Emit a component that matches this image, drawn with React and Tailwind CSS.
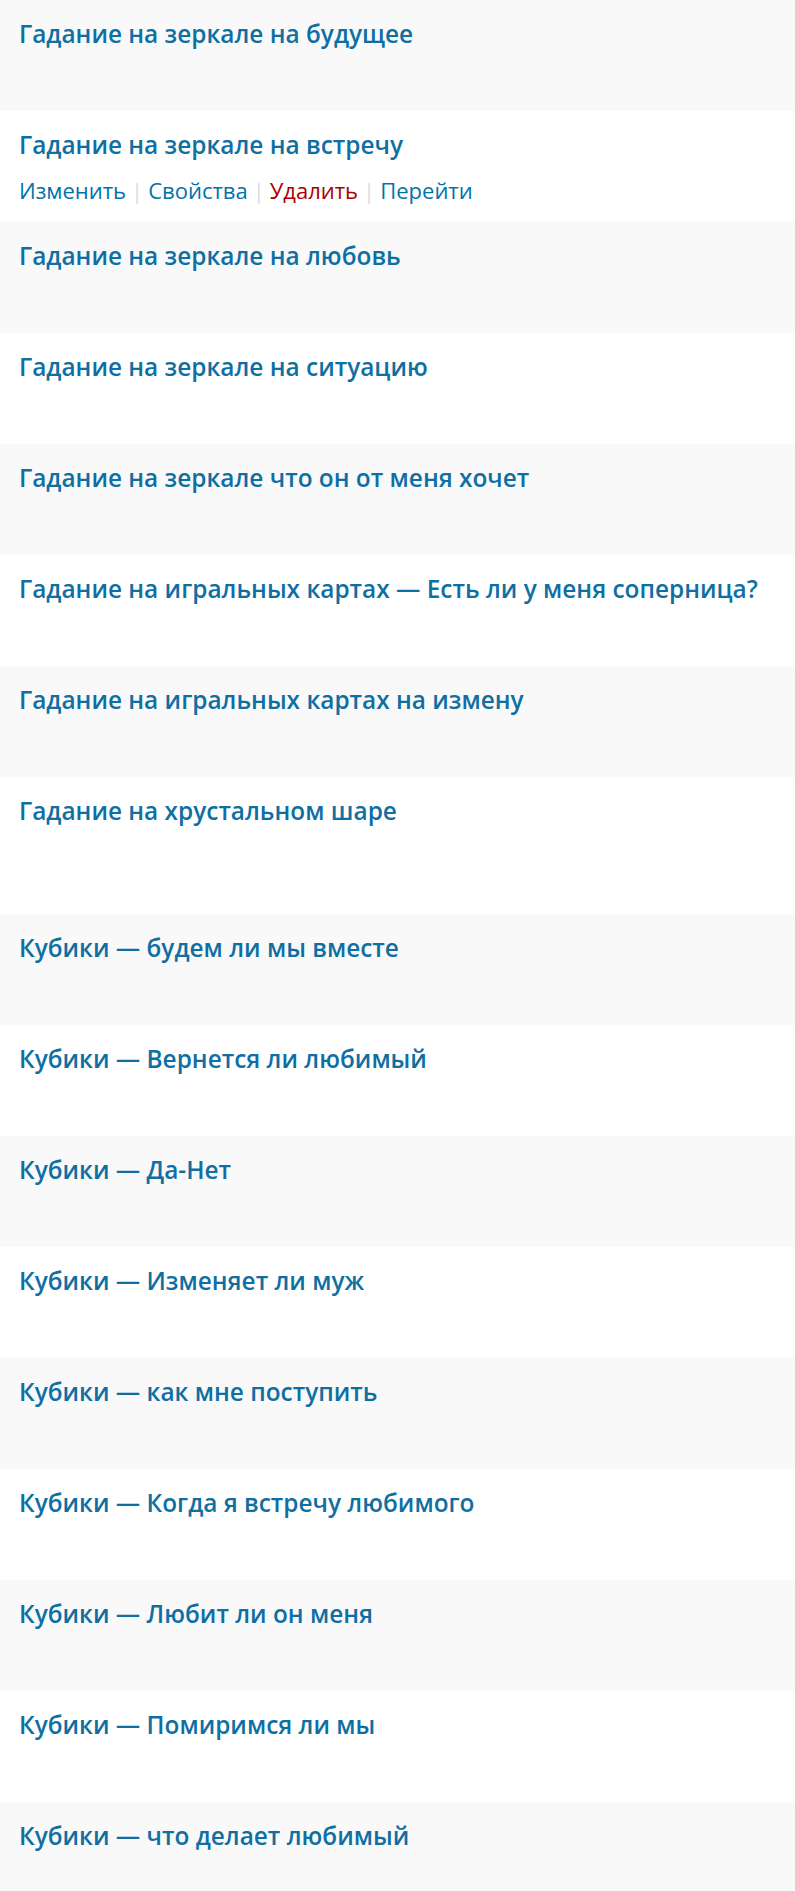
const posts = [
  'Гадание на зеркале на будущее',
  'Гадание на зеркале на встречу',
  'Гадание на зеркале на любовь',
  'Гадание на зеркале на ситуацию',
  'Гадание на зеркале что он от меня хочет',
  'Гадание на игральных картах — Есть ли у меня соперница?',
  'Гадание на игральных картах на измену',
  'Гадание на хрустальном шаре',
  'Кубики — будем ли мы вместе',
  'Кубики — Вернется ли любимый',
  'Кубики — Да-Нет',
  'Кубики — Изменяет ли муж',
  'Кубики — как мне поступить',
  'Кубики — Когда я встречу любимого',
  'Кубики — Любит ли он меня',
  'Кубики — Помиримся ли мы',
  'Кубики — что делает любимый',
];

function RowActions() {
  return (
    <div className="flex items-center text-[22px] leading-[30px] mt-[14px]">
      <a href="#" className="text-[#0073aa]">Изменить</a>
      <span className="mx-[5px] text-[#dddddd]">|</span>
      <a href="#" className="text-[#0073aa]">Свойства</a>
      <span className="mx-[5px] text-[#dddddd]">|</span>
      <a href="#" className="text-[#a00]">Удалить</a>
      <span className="mx-[5px] text-[#dddddd]">|</span>
      <a href="#" className="text-[#0073aa]">Перейти</a>
    </div>
  );
}

export default function App() {
  return (
    <div
      className="w-[795px] bg-white overflow-hidden"
      style={{ fontFamily: '"Open Sans", "Noto Sans", sans-serif' }}
    >
      {posts.map((title, i) => (
        <div
          key={title}
          className={`${i % 2 === 0 ? 'bg-[#f9f9f9]' : 'bg-white'} ${
            i === 7 ? 'h-[137px]' : 'h-[111px]'
          } px-[19px] pt-[18px]`}
        >
          <a href="#" className="block text-[24.4px] leading-[32px] font-semibold text-[#0f6fa3]">
            {title}
          </a>
          {i === 1 && <RowActions />}
        </div>
      ))}
    </div>
  );
}
